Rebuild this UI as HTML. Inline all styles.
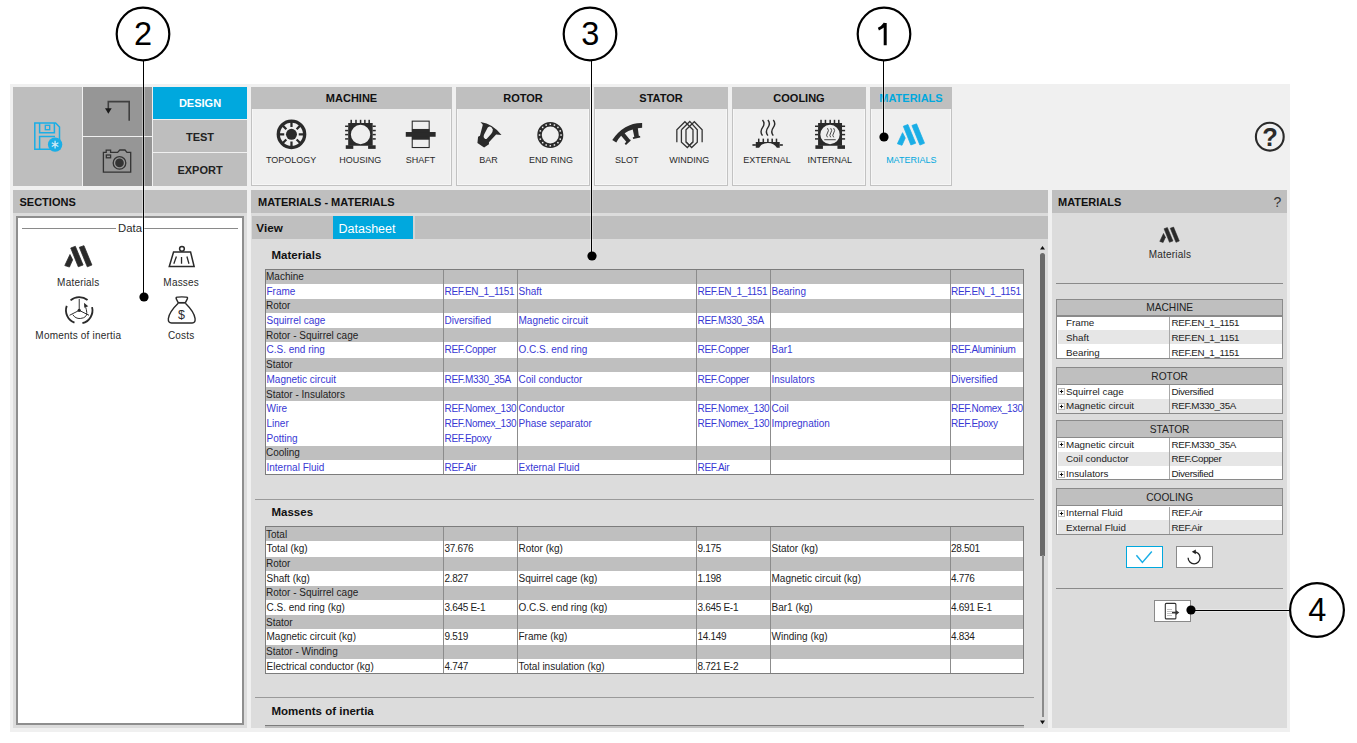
<!DOCTYPE html><html><head><meta charset="utf-8"><style>
html,body{margin:0;padding:0;background:#fff;width:1357px;height:743px;overflow:hidden;}
body{position:relative;font-family:"Liberation Sans",sans-serif;}
div,svg{position:absolute;}
</style></head><body>
<div style="left:10px;top:84px;width:1280px;height:648px;background:#f0f0f0;"></div>
<div style="left:13px;top:87px;width:69px;height:98.6px;background:#bebebe;"></div>
<div style="left:83px;top:87px;width:69px;height:49px;background:#969696;"></div>
<div style="left:83px;top:137px;width:69px;height:48.6px;background:#969696;"></div>
<div style="left:153px;top:87px;width:94px;height:32px;background:#00a8de;"></div>
<div style="left:153px;top:120px;width:94px;height:32px;background:#bebebe;"></div>
<div style="left:153px;top:153px;width:94px;height:32.6px;background:#bebebe;"></div>
<div style="left:153px;top:87px;width:94px;height:32px;line-height:32px;font-size:11px;font-weight:bold;color:#fff;text-align:center;white-space:nowrap;">DESIGN</div>
<div style="left:153px;top:120.5px;width:94px;height:32px;line-height:32px;font-size:11px;font-weight:bold;color:#222;text-align:center;white-space:nowrap;">TEST</div>
<div style="left:153px;top:154px;width:94px;height:32px;line-height:32px;font-size:11px;font-weight:bold;color:#222;text-align:center;white-space:nowrap;">EXPORT</div>
<div style="left:251px;top:87px;width:201px;height:22px;background:#bfbfbf;"></div>
<div style="left:251px;top:109px;width:201px;height:77px;background:#efefef;box-sizing:border-box;border:1px solid #c2c2c2;border-top:none;box-shadow:inset -1px -1px 0 #f6f6f6, inset 1px 0 0 #f6f6f6;"></div>
<div style="left:251px;top:87px;width:201px;height:22px;line-height:22px;font-size:11px;font-weight:bold;color:#111;text-align:center;white-space:nowrap;">MACHINE</div>
<div style="left:456px;top:87px;width:134px;height:22px;background:#bfbfbf;"></div>
<div style="left:456px;top:109px;width:134px;height:77px;background:#efefef;box-sizing:border-box;border:1px solid #c2c2c2;border-top:none;box-shadow:inset -1px -1px 0 #f6f6f6, inset 1px 0 0 #f6f6f6;"></div>
<div style="left:456px;top:87px;width:134px;height:22px;line-height:22px;font-size:11px;font-weight:bold;color:#111;text-align:center;white-space:nowrap;">ROTOR</div>
<div style="left:594px;top:87px;width:134px;height:22px;background:#bfbfbf;"></div>
<div style="left:594px;top:109px;width:134px;height:77px;background:#efefef;box-sizing:border-box;border:1px solid #c2c2c2;border-top:none;box-shadow:inset -1px -1px 0 #f6f6f6, inset 1px 0 0 #f6f6f6;"></div>
<div style="left:594px;top:87px;width:134px;height:22px;line-height:22px;font-size:11px;font-weight:bold;color:#111;text-align:center;white-space:nowrap;">STATOR</div>
<div style="left:732px;top:87px;width:134px;height:22px;background:#bfbfbf;"></div>
<div style="left:732px;top:109px;width:134px;height:77px;background:#efefef;box-sizing:border-box;border:1px solid #c2c2c2;border-top:none;box-shadow:inset -1px -1px 0 #f6f6f6, inset 1px 0 0 #f6f6f6;"></div>
<div style="left:732px;top:87px;width:134px;height:22px;line-height:22px;font-size:11px;font-weight:bold;color:#111;text-align:center;white-space:nowrap;">COOLING</div>
<div style="left:870px;top:87px;width:82px;height:22px;background:#bfbfbf;"></div>
<div style="left:870px;top:109px;width:82px;height:77px;background:#efefef;box-sizing:border-box;border:1px solid #c2c2c2;border-top:none;box-shadow:inset -1px -1px 0 #f6f6f6, inset 1px 0 0 #f6f6f6;"></div>
<div style="left:870px;top:87px;width:82px;height:22px;line-height:22px;font-size:11px;font-weight:bold;color:#00a8de;text-align:center;white-space:nowrap;">MATERIALS</div>
<div style="left:251.2px;top:152px;width:80px;height:16px;line-height:16px;font-size:9px;font-weight:normal;color:#2a2a2a;text-align:center;white-space:nowrap;">TOPOLOGY</div>
<div style="left:320.2px;top:152px;width:80px;height:16px;line-height:16px;font-size:9px;font-weight:normal;color:#2a2a2a;text-align:center;white-space:nowrap;">HOUSING</div>
<div style="left:380.4px;top:152px;width:80px;height:16px;line-height:16px;font-size:9px;font-weight:normal;color:#2a2a2a;text-align:center;white-space:nowrap;">SHAFT</div>
<div style="left:448.5px;top:152px;width:80px;height:16px;line-height:16px;font-size:9px;font-weight:normal;color:#2a2a2a;text-align:center;white-space:nowrap;">BAR</div>
<div style="left:510.9px;top:152px;width:80px;height:16px;line-height:16px;font-size:9px;font-weight:normal;color:#2a2a2a;text-align:center;white-space:nowrap;">END RING</div>
<div style="left:586.8px;top:152px;width:80px;height:16px;line-height:16px;font-size:9px;font-weight:normal;color:#2a2a2a;text-align:center;white-space:nowrap;">SLOT</div>
<div style="left:649.2px;top:152px;width:80px;height:16px;line-height:16px;font-size:9px;font-weight:normal;color:#2a2a2a;text-align:center;white-space:nowrap;">WINDING</div>
<div style="left:727px;top:152px;width:80px;height:16px;line-height:16px;font-size:9px;font-weight:normal;color:#2a2a2a;text-align:center;white-space:nowrap;">EXTERNAL</div>
<div style="left:789.8px;top:152px;width:80px;height:16px;line-height:16px;font-size:9px;font-weight:normal;color:#2a2a2a;text-align:center;white-space:nowrap;">INTERNAL</div>
<div style="left:871.3px;top:152px;width:80px;height:16px;line-height:16px;font-size:9px;font-weight:normal;color:#00a8de;text-align:center;white-space:nowrap;">MATERIALS</div>
<div style="left:13px;top:190px;width:234px;height:22.5px;background:#bfbfbf;"></div>
<div style="left:19.5px;top:190.8px;width:120px;height:22.5px;line-height:22.5px;font-size:11px;font-weight:bold;color:#111;text-align:left;white-space:nowrap;">SECTIONS</div>
<div style="left:13px;top:212.5px;width:234px;height:515px;background:#dcdcdc;"></div>
<div style="left:16px;top:216px;width:228px;height:509px;background:#fff;box-sizing:border-box;border:2px solid #8e8e8e;"></div>
<div style="left:22px;top:228px;width:216px;height:1px;background:#8a8a8a;"></div>
<div style="left:116px;top:220px;width:28px;height:17px;line-height:17px;font-size:11.3px;font-weight:normal;color:#2a2a2a;text-align:center;white-space:nowrap;background:#fff;">Data</div>
<div style="left:18.299999999999997px;top:274.5px;width:120px;height:16px;line-height:16px;font-size:10px;font-weight:normal;color:#2a2a2a;text-align:center;white-space:nowrap;letter-spacing:0.2px;">Materials</div>
<div style="left:121.19999999999999px;top:274.5px;width:120px;height:16px;line-height:16px;font-size:10px;font-weight:normal;color:#2a2a2a;text-align:center;white-space:nowrap;letter-spacing:0.2px;">Masses</div>
<div style="left:18.299999999999997px;top:327.7px;width:120px;height:16px;line-height:16px;font-size:10px;font-weight:normal;color:#2a2a2a;text-align:center;white-space:nowrap;letter-spacing:0.2px;">Moments of inertia</div>
<div style="left:121.19999999999999px;top:327.7px;width:120px;height:16px;line-height:16px;font-size:10px;font-weight:normal;color:#2a2a2a;text-align:center;white-space:nowrap;letter-spacing:0.2px;">Costs</div>
<div style="left:251px;top:190px;width:797px;height:22.5px;background:#bfbfbf;"></div>
<div style="left:258px;top:190.8px;width:300px;height:22.5px;line-height:22.5px;font-size:11px;font-weight:bold;color:#111;text-align:left;white-space:nowrap;">MATERIALS - MATERIALS</div>
<div style="left:251px;top:212.5px;width:797px;height:515px;background:#dcdcdc;"></div>
<div style="left:251.5px;top:216px;width:796.5px;height:23px;background:#bfbfbf;"></div>
<div style="left:256.3px;top:215.9px;width:70px;height:23px;line-height:23px;font-size:11.7px;font-weight:bold;color:#111;text-align:left;white-space:nowrap;">View</div>
<div style="left:333px;top:216px;width:80px;height:23px;background:#00a8de;"></div>
<div style="left:413px;top:216px;width:1.8px;height:23px;background:#d4d4d4;"></div>
<div style="left:338.5px;top:217.5px;width:75px;height:23px;line-height:23px;font-size:12.5px;font-weight:normal;color:#fff;text-align:left;white-space:nowrap;">Datasheet</div>
<div style="left:1052px;top:190px;width:235px;height:22.5px;background:#bfbfbf;"></div>
<div style="left:1058px;top:190.8px;width:120px;height:22.5px;line-height:22.5px;font-size:11px;font-weight:bold;color:#111;text-align:left;white-space:nowrap;">MATERIALS</div>
<div style="left:1268.5px;top:190.5px;width:18px;height:22.5px;line-height:22.5px;font-size:14px;font-weight:normal;color:#333;text-align:center;white-space:nowrap;">?</div>
<div style="left:1052px;top:212.5px;width:235px;height:515px;background:#dcdcdc;"></div>
<div style="left:1055.5px;top:283px;width:227.5px;height:1px;background:#8a8a8a;"></div>
<div style="left:1110px;top:247.3px;width:120px;height:16px;line-height:16px;font-size:10px;font-weight:normal;color:#2a2a2a;text-align:center;white-space:nowrap;letter-spacing:0.2px;">Materials</div>
<div style="left:1055.5px;top:588px;width:227.5px;height:1px;background:#8a8a8a;"></div>
<div style="left:271.5px;top:245px;width:200px;height:21px;line-height:21px;font-size:11.5px;font-weight:bold;color:#111;text-align:left;white-space:nowrap;">Materials</div>
<div style="left:265px;top:269.6px;width:759px;height:204px;background:#fff;"></div>
<div style="left:265px;top:269.6px;width:759px;height:13.91px;background:#bfbfbf;"></div>
<div style="left:266px;top:269.90000000000003px;width:170px;height:14.65px;line-height:14.65px;font-size:10px;font-weight:normal;color:#222;text-align:left;white-space:nowrap;">Machine</div>
<div style="left:266.5px;top:284.61px;width:200px;height:14.65px;line-height:14.65px;font-size:10px;font-weight:normal;color:#3838d4;text-align:left;white-space:nowrap;">Frame</div>
<div style="left:444.5px;top:284.61px;width:200px;height:14.65px;line-height:14.65px;font-size:10px;font-weight:normal;color:#3838d4;text-align:left;white-space:nowrap;letter-spacing:-0.3px;">REF.EN_1_1151</div>
<div style="left:518.5px;top:284.61px;width:200px;height:14.65px;line-height:14.65px;font-size:10px;font-weight:normal;color:#3838d4;text-align:left;white-space:nowrap;">Shaft</div>
<div style="left:697.5px;top:284.61px;width:200px;height:14.65px;line-height:14.65px;font-size:10px;font-weight:normal;color:#3838d4;text-align:left;white-space:nowrap;letter-spacing:-0.3px;">REF.EN_1_1151</div>
<div style="left:771.5px;top:284.61px;width:200px;height:14.65px;line-height:14.65px;font-size:10px;font-weight:normal;color:#3838d4;text-align:left;white-space:nowrap;">Bearing</div>
<div style="left:951.0px;top:284.61px;width:200px;height:14.65px;line-height:14.65px;font-size:10px;font-weight:normal;color:#3838d4;text-align:left;white-space:nowrap;letter-spacing:-0.3px;">REF.EN_1_1151</div>
<div style="left:265px;top:299.02000000000004px;width:759px;height:13.91px;background:#bfbfbf;"></div>
<div style="left:266px;top:299.32000000000005px;width:170px;height:14.65px;line-height:14.65px;font-size:10px;font-weight:normal;color:#222;text-align:left;white-space:nowrap;">Rotor</div>
<div style="left:266.5px;top:314.03000000000003px;width:200px;height:14.65px;line-height:14.65px;font-size:10px;font-weight:normal;color:#3838d4;text-align:left;white-space:nowrap;">Squirrel cage</div>
<div style="left:444.5px;top:314.03000000000003px;width:200px;height:14.65px;line-height:14.65px;font-size:10px;font-weight:normal;color:#3838d4;text-align:left;white-space:nowrap;">Diversified</div>
<div style="left:518.5px;top:314.03000000000003px;width:200px;height:14.65px;line-height:14.65px;font-size:10px;font-weight:normal;color:#3838d4;text-align:left;white-space:nowrap;">Magnetic circuit</div>
<div style="left:697.5px;top:314.03000000000003px;width:200px;height:14.65px;line-height:14.65px;font-size:10px;font-weight:normal;color:#3838d4;text-align:left;white-space:nowrap;letter-spacing:-0.3px;">REF.M330_35A</div>
<div style="left:265px;top:328.44000000000005px;width:759px;height:13.91px;background:#bfbfbf;"></div>
<div style="left:266px;top:328.74000000000007px;width:170px;height:14.65px;line-height:14.65px;font-size:10px;font-weight:normal;color:#222;text-align:left;white-space:nowrap;">Rotor - Squirrel cage</div>
<div style="left:266.5px;top:343.45000000000005px;width:200px;height:14.65px;line-height:14.65px;font-size:10px;font-weight:normal;color:#3838d4;text-align:left;white-space:nowrap;">C.S. end ring</div>
<div style="left:444.5px;top:343.45000000000005px;width:200px;height:14.65px;line-height:14.65px;font-size:10px;font-weight:normal;color:#3838d4;text-align:left;white-space:nowrap;letter-spacing:-0.3px;">REF.Copper</div>
<div style="left:518.5px;top:343.45000000000005px;width:200px;height:14.65px;line-height:14.65px;font-size:10px;font-weight:normal;color:#3838d4;text-align:left;white-space:nowrap;">O.C.S. end ring</div>
<div style="left:697.5px;top:343.45000000000005px;width:200px;height:14.65px;line-height:14.65px;font-size:10px;font-weight:normal;color:#3838d4;text-align:left;white-space:nowrap;letter-spacing:-0.3px;">REF.Copper</div>
<div style="left:771.5px;top:343.45000000000005px;width:200px;height:14.65px;line-height:14.65px;font-size:10px;font-weight:normal;color:#3838d4;text-align:left;white-space:nowrap;">Bar1</div>
<div style="left:951.0px;top:343.45000000000005px;width:200px;height:14.65px;line-height:14.65px;font-size:10px;font-weight:normal;color:#3838d4;text-align:left;white-space:nowrap;letter-spacing:-0.3px;">REF.Aluminium</div>
<div style="left:265px;top:357.86px;width:759px;height:13.91px;background:#bfbfbf;"></div>
<div style="left:266px;top:358.16px;width:170px;height:14.65px;line-height:14.65px;font-size:10px;font-weight:normal;color:#222;text-align:left;white-space:nowrap;">Stator</div>
<div style="left:266.5px;top:372.87000000000006px;width:200px;height:14.65px;line-height:14.65px;font-size:10px;font-weight:normal;color:#3838d4;text-align:left;white-space:nowrap;">Magnetic circuit</div>
<div style="left:444.5px;top:372.87000000000006px;width:200px;height:14.65px;line-height:14.65px;font-size:10px;font-weight:normal;color:#3838d4;text-align:left;white-space:nowrap;letter-spacing:-0.3px;">REF.M330_35A</div>
<div style="left:518.5px;top:372.87000000000006px;width:200px;height:14.65px;line-height:14.65px;font-size:10px;font-weight:normal;color:#3838d4;text-align:left;white-space:nowrap;">Coil conductor</div>
<div style="left:697.5px;top:372.87000000000006px;width:200px;height:14.65px;line-height:14.65px;font-size:10px;font-weight:normal;color:#3838d4;text-align:left;white-space:nowrap;letter-spacing:-0.3px;">REF.Copper</div>
<div style="left:771.5px;top:372.87000000000006px;width:200px;height:14.65px;line-height:14.65px;font-size:10px;font-weight:normal;color:#3838d4;text-align:left;white-space:nowrap;">Insulators</div>
<div style="left:951.0px;top:372.87000000000006px;width:200px;height:14.65px;line-height:14.65px;font-size:10px;font-weight:normal;color:#3838d4;text-align:left;white-space:nowrap;">Diversified</div>
<div style="left:265px;top:387.28000000000003px;width:759px;height:13.91px;background:#bfbfbf;"></div>
<div style="left:266px;top:387.58000000000004px;width:170px;height:14.65px;line-height:14.65px;font-size:10px;font-weight:normal;color:#222;text-align:left;white-space:nowrap;">Stator - Insulators</div>
<div style="left:266.5px;top:402.29px;width:200px;height:14.65px;line-height:14.65px;font-size:10px;font-weight:normal;color:#3838d4;text-align:left;white-space:nowrap;">Wire</div>
<div style="left:444.5px;top:402.29px;width:200px;height:14.65px;line-height:14.65px;font-size:10px;font-weight:normal;color:#3838d4;text-align:left;white-space:nowrap;letter-spacing:-0.3px;">REF.Nomex_130</div>
<div style="left:518.5px;top:402.29px;width:200px;height:14.65px;line-height:14.65px;font-size:10px;font-weight:normal;color:#3838d4;text-align:left;white-space:nowrap;">Conductor</div>
<div style="left:697.5px;top:402.29px;width:200px;height:14.65px;line-height:14.65px;font-size:10px;font-weight:normal;color:#3838d4;text-align:left;white-space:nowrap;letter-spacing:-0.3px;">REF.Nomex_130</div>
<div style="left:771.5px;top:402.29px;width:200px;height:14.65px;line-height:14.65px;font-size:10px;font-weight:normal;color:#3838d4;text-align:left;white-space:nowrap;">Coil</div>
<div style="left:951.0px;top:402.29px;width:200px;height:14.65px;line-height:14.65px;font-size:10px;font-weight:normal;color:#3838d4;text-align:left;white-space:nowrap;letter-spacing:-0.3px;">REF.Nomex_130</div>
<div style="left:266.5px;top:417.00000000000006px;width:200px;height:14.65px;line-height:14.65px;font-size:10px;font-weight:normal;color:#3838d4;text-align:left;white-space:nowrap;">Liner</div>
<div style="left:444.5px;top:417.00000000000006px;width:200px;height:14.65px;line-height:14.65px;font-size:10px;font-weight:normal;color:#3838d4;text-align:left;white-space:nowrap;letter-spacing:-0.3px;">REF.Nomex_130</div>
<div style="left:518.5px;top:417.00000000000006px;width:200px;height:14.65px;line-height:14.65px;font-size:10px;font-weight:normal;color:#3838d4;text-align:left;white-space:nowrap;">Phase separator</div>
<div style="left:697.5px;top:417.00000000000006px;width:200px;height:14.65px;line-height:14.65px;font-size:10px;font-weight:normal;color:#3838d4;text-align:left;white-space:nowrap;letter-spacing:-0.3px;">REF.Nomex_130</div>
<div style="left:771.5px;top:417.00000000000006px;width:200px;height:14.65px;line-height:14.65px;font-size:10px;font-weight:normal;color:#3838d4;text-align:left;white-space:nowrap;">Impregnation</div>
<div style="left:951.0px;top:417.00000000000006px;width:200px;height:14.65px;line-height:14.65px;font-size:10px;font-weight:normal;color:#3838d4;text-align:left;white-space:nowrap;letter-spacing:-0.3px;">REF.Epoxy</div>
<div style="left:266.5px;top:431.71000000000004px;width:200px;height:14.65px;line-height:14.65px;font-size:10px;font-weight:normal;color:#3838d4;text-align:left;white-space:nowrap;">Potting</div>
<div style="left:444.5px;top:431.71000000000004px;width:200px;height:14.65px;line-height:14.65px;font-size:10px;font-weight:normal;color:#3838d4;text-align:left;white-space:nowrap;letter-spacing:-0.3px;">REF.Epoxy</div>
<div style="left:265px;top:446.12px;width:759px;height:13.91px;background:#bfbfbf;"></div>
<div style="left:266px;top:446.42px;width:170px;height:14.65px;line-height:14.65px;font-size:10px;font-weight:normal;color:#222;text-align:left;white-space:nowrap;">Cooling</div>
<div style="left:266.5px;top:461.13000000000005px;width:200px;height:14.65px;line-height:14.65px;font-size:10px;font-weight:normal;color:#3838d4;text-align:left;white-space:nowrap;">Internal Fluid</div>
<div style="left:444.5px;top:461.13000000000005px;width:200px;height:14.65px;line-height:14.65px;font-size:10px;font-weight:normal;color:#3838d4;text-align:left;white-space:nowrap;letter-spacing:-0.3px;">REF.Air</div>
<div style="left:518.5px;top:461.13000000000005px;width:200px;height:14.65px;line-height:14.65px;font-size:10px;font-weight:normal;color:#3838d4;text-align:left;white-space:nowrap;">External Fluid</div>
<div style="left:697.5px;top:461.13000000000005px;width:200px;height:14.65px;line-height:14.65px;font-size:10px;font-weight:normal;color:#3838d4;text-align:left;white-space:nowrap;letter-spacing:-0.3px;">REF.Air</div>
<div style="left:443px;top:269.6px;width:1px;height:204px;background:#8c8c8c;"></div>
<div style="left:517px;top:269.6px;width:1px;height:204px;background:#8c8c8c;"></div>
<div style="left:696px;top:269.6px;width:1px;height:204px;background:#8c8c8c;"></div>
<div style="left:770px;top:269.6px;width:1px;height:204px;background:#8c8c8c;"></div>
<div style="left:949.5px;top:269.6px;width:1px;height:204px;background:#8c8c8c;"></div>
<div style="left:264.5px;top:268.6px;width:759.5px;height:206px;box-sizing:border-box;border:1.2px solid #7c7c7c;"></div>
<div style="left:254.5px;top:498.5px;width:779.5px;height:1px;background:#9a9a9a;"></div>
<div style="left:271.5px;top:502.2px;width:200px;height:21px;line-height:21px;font-size:11.5px;font-weight:bold;color:#111;text-align:left;white-space:nowrap;">Masses</div>
<div style="left:265px;top:527.3px;width:759px;height:146px;background:#fff;"></div>
<div style="left:265px;top:527.3px;width:759px;height:13.879999999999999px;background:#bfbfbf;"></div>
<div style="left:266px;top:527.5999999999999px;width:170px;height:14.65px;line-height:14.65px;font-size:10px;font-weight:normal;color:#222;text-align:left;white-space:nowrap;">Total</div>
<div style="left:266.5px;top:542.2799999999999px;width:200px;height:14.65px;line-height:14.65px;font-size:10px;font-weight:normal;color:#222;text-align:left;white-space:nowrap;">Total (kg)</div>
<div style="left:444.5px;top:542.2799999999999px;width:200px;height:14.65px;line-height:14.65px;font-size:10px;font-weight:normal;color:#222;text-align:left;white-space:nowrap;letter-spacing:-0.3px;">37.676</div>
<div style="left:518.5px;top:542.2799999999999px;width:200px;height:14.65px;line-height:14.65px;font-size:10px;font-weight:normal;color:#222;text-align:left;white-space:nowrap;">Rotor (kg)</div>
<div style="left:697.5px;top:542.2799999999999px;width:200px;height:14.65px;line-height:14.65px;font-size:10px;font-weight:normal;color:#222;text-align:left;white-space:nowrap;letter-spacing:-0.3px;">9.175</div>
<div style="left:771.5px;top:542.2799999999999px;width:200px;height:14.65px;line-height:14.65px;font-size:10px;font-weight:normal;color:#222;text-align:left;white-space:nowrap;">Stator (kg)</div>
<div style="left:951.0px;top:542.2799999999999px;width:200px;height:14.65px;line-height:14.65px;font-size:10px;font-weight:normal;color:#222;text-align:left;white-space:nowrap;letter-spacing:-0.3px;">28.501</div>
<div style="left:265px;top:556.66px;width:759px;height:13.879999999999999px;background:#bfbfbf;"></div>
<div style="left:266px;top:556.9599999999999px;width:170px;height:14.65px;line-height:14.65px;font-size:10px;font-weight:normal;color:#222;text-align:left;white-space:nowrap;">Rotor</div>
<div style="left:266.5px;top:571.6399999999999px;width:200px;height:14.65px;line-height:14.65px;font-size:10px;font-weight:normal;color:#222;text-align:left;white-space:nowrap;">Shaft (kg)</div>
<div style="left:444.5px;top:571.6399999999999px;width:200px;height:14.65px;line-height:14.65px;font-size:10px;font-weight:normal;color:#222;text-align:left;white-space:nowrap;letter-spacing:-0.3px;">2.827</div>
<div style="left:518.5px;top:571.6399999999999px;width:200px;height:14.65px;line-height:14.65px;font-size:10px;font-weight:normal;color:#222;text-align:left;white-space:nowrap;">Squirrel cage (kg)</div>
<div style="left:697.5px;top:571.6399999999999px;width:200px;height:14.65px;line-height:14.65px;font-size:10px;font-weight:normal;color:#222;text-align:left;white-space:nowrap;letter-spacing:-0.3px;">1.198</div>
<div style="left:771.5px;top:571.6399999999999px;width:200px;height:14.65px;line-height:14.65px;font-size:10px;font-weight:normal;color:#222;text-align:left;white-space:nowrap;">Magnetic circuit (kg)</div>
<div style="left:951.0px;top:571.6399999999999px;width:200px;height:14.65px;line-height:14.65px;font-size:10px;font-weight:normal;color:#222;text-align:left;white-space:nowrap;letter-spacing:-0.3px;">4.776</div>
<div style="left:265px;top:586.02px;width:759px;height:13.879999999999999px;background:#bfbfbf;"></div>
<div style="left:266px;top:586.3199999999999px;width:170px;height:14.65px;line-height:14.65px;font-size:10px;font-weight:normal;color:#222;text-align:left;white-space:nowrap;">Rotor - Squirrel cage</div>
<div style="left:266.5px;top:600.9999999999999px;width:200px;height:14.65px;line-height:14.65px;font-size:10px;font-weight:normal;color:#222;text-align:left;white-space:nowrap;">C.S. end ring (kg)</div>
<div style="left:444.5px;top:600.9999999999999px;width:200px;height:14.65px;line-height:14.65px;font-size:10px;font-weight:normal;color:#222;text-align:left;white-space:nowrap;letter-spacing:-0.3px;">3.645 E-1</div>
<div style="left:518.5px;top:600.9999999999999px;width:200px;height:14.65px;line-height:14.65px;font-size:10px;font-weight:normal;color:#222;text-align:left;white-space:nowrap;">O.C.S. end ring (kg)</div>
<div style="left:697.5px;top:600.9999999999999px;width:200px;height:14.65px;line-height:14.65px;font-size:10px;font-weight:normal;color:#222;text-align:left;white-space:nowrap;letter-spacing:-0.3px;">3.645 E-1</div>
<div style="left:771.5px;top:600.9999999999999px;width:200px;height:14.65px;line-height:14.65px;font-size:10px;font-weight:normal;color:#222;text-align:left;white-space:nowrap;">Bar1 (kg)</div>
<div style="left:951.0px;top:600.9999999999999px;width:200px;height:14.65px;line-height:14.65px;font-size:10px;font-weight:normal;color:#222;text-align:left;white-space:nowrap;letter-spacing:-0.3px;">4.691 E-1</div>
<div style="left:265px;top:615.38px;width:759px;height:13.879999999999999px;background:#bfbfbf;"></div>
<div style="left:266px;top:615.68px;width:170px;height:14.65px;line-height:14.65px;font-size:10px;font-weight:normal;color:#222;text-align:left;white-space:nowrap;">Stator</div>
<div style="left:266.5px;top:630.3599999999999px;width:200px;height:14.65px;line-height:14.65px;font-size:10px;font-weight:normal;color:#222;text-align:left;white-space:nowrap;">Magnetic circuit (kg)</div>
<div style="left:444.5px;top:630.3599999999999px;width:200px;height:14.65px;line-height:14.65px;font-size:10px;font-weight:normal;color:#222;text-align:left;white-space:nowrap;letter-spacing:-0.3px;">9.519</div>
<div style="left:518.5px;top:630.3599999999999px;width:200px;height:14.65px;line-height:14.65px;font-size:10px;font-weight:normal;color:#222;text-align:left;white-space:nowrap;">Frame (kg)</div>
<div style="left:697.5px;top:630.3599999999999px;width:200px;height:14.65px;line-height:14.65px;font-size:10px;font-weight:normal;color:#222;text-align:left;white-space:nowrap;letter-spacing:-0.3px;">14.149</div>
<div style="left:771.5px;top:630.3599999999999px;width:200px;height:14.65px;line-height:14.65px;font-size:10px;font-weight:normal;color:#222;text-align:left;white-space:nowrap;">Winding (kg)</div>
<div style="left:951.0px;top:630.3599999999999px;width:200px;height:14.65px;line-height:14.65px;font-size:10px;font-weight:normal;color:#222;text-align:left;white-space:nowrap;letter-spacing:-0.3px;">4.834</div>
<div style="left:265px;top:644.74px;width:759px;height:13.879999999999999px;background:#bfbfbf;"></div>
<div style="left:266px;top:645.04px;width:170px;height:14.65px;line-height:14.65px;font-size:10px;font-weight:normal;color:#222;text-align:left;white-space:nowrap;">Stator - Winding</div>
<div style="left:266.5px;top:659.7199999999999px;width:200px;height:14.65px;line-height:14.65px;font-size:10px;font-weight:normal;color:#222;text-align:left;white-space:nowrap;">Electrical conductor (kg)</div>
<div style="left:444.5px;top:659.7199999999999px;width:200px;height:14.65px;line-height:14.65px;font-size:10px;font-weight:normal;color:#222;text-align:left;white-space:nowrap;letter-spacing:-0.3px;">4.747</div>
<div style="left:518.5px;top:659.7199999999999px;width:200px;height:14.65px;line-height:14.65px;font-size:10px;font-weight:normal;color:#222;text-align:left;white-space:nowrap;">Total insulation (kg)</div>
<div style="left:697.5px;top:659.7199999999999px;width:200px;height:14.65px;line-height:14.65px;font-size:10px;font-weight:normal;color:#222;text-align:left;white-space:nowrap;letter-spacing:-0.3px;">8.721 E-2</div>
<div style="left:443px;top:527.3px;width:1px;height:146px;background:#8c8c8c;"></div>
<div style="left:517px;top:527.3px;width:1px;height:146px;background:#8c8c8c;"></div>
<div style="left:696px;top:527.3px;width:1px;height:146px;background:#8c8c8c;"></div>
<div style="left:770px;top:527.3px;width:1px;height:146px;background:#8c8c8c;"></div>
<div style="left:949.5px;top:527.3px;width:1px;height:146px;background:#8c8c8c;"></div>
<div style="left:264.5px;top:526.3px;width:759.5px;height:148px;box-sizing:border-box;border:1.2px solid #7c7c7c;"></div>
<div style="left:254.5px;top:697px;width:779.5px;height:1px;background:#9a9a9a;"></div>
<div style="left:271.5px;top:701.2px;width:200px;height:21px;line-height:21px;font-size:11.5px;font-weight:bold;color:#111;text-align:left;white-space:nowrap;">Moments of inertia</div>
<div style="left:264.5px;top:725.5px;width:759px;height:2px;background:#bfbfbf;"></div>
<div style="left:264.5px;top:724.8px;width:759px;height:1.2px;background:#7c7c7c;"></div>
<svg style="left:1038px;top:244px;" width="9" height="7" viewBox="0 0 9 7"><path d="M2 5.6 L4.5 2 L7 5.6 Z" fill="#111"/></svg>
<div style="left:1040.2px;top:253.2px;width:5.2px;height:303px;background:#6a6a6a;border-radius:2.5px 2.5px 0 0;"></div>
<div style="left:1041.5px;top:555px;width:2.6px;height:161.5px;background:#8a8a8a;"></div>
<svg style="left:1038px;top:718px;" width="9" height="7" viewBox="0 0 9 7"><path d="M2 2.6 L7 2.6 L4.5 6.2 Z" fill="#111"/></svg>
<div style="left:1056.3px;top:298.5px;width:226.7px;height:60.3px;background:#fff;"></div>
<div style="left:1056.3px;top:298.5px;width:226.7px;height:17.6px;background:#bfbfbf;"></div>
<div style="left:1056.3px;top:315.3px;width:226.7px;height:1.4px;background:#8a8a8a;"></div>
<div style="left:1056.3px;top:299.1px;width:226.7px;height:17px;line-height:17px;font-size:10.2px;font-weight:normal;color:#222;text-align:center;white-space:nowrap;">MACHINE</div>
<div style="left:1066px;top:316.4px;width:100px;height:13.7px;line-height:13.7px;font-size:9.8px;font-weight:normal;color:#222;text-align:left;white-space:nowrap;">Frame</div>
<div style="left:1171.5px;top:316.4px;width:110px;height:13.7px;line-height:13.7px;font-size:9.8px;font-weight:normal;color:#222;text-align:left;white-space:nowrap;letter-spacing:-0.35px;">REF.EN_1_1151</div>
<div style="left:1057.5px;top:330.4px;width:224.5px;height:13.7px;background:#e6e6e6;"></div>
<div style="left:1066px;top:330.95px;width:100px;height:13.7px;line-height:13.7px;font-size:9.8px;font-weight:normal;color:#222;text-align:left;white-space:nowrap;">Shaft</div>
<div style="left:1171.5px;top:330.95px;width:110px;height:13.7px;line-height:13.7px;font-size:9.8px;font-weight:normal;color:#222;text-align:left;white-space:nowrap;letter-spacing:-0.35px;">REF.EN_1_1151</div>
<div style="left:1066px;top:345.5px;width:100px;height:13.7px;line-height:13.7px;font-size:9.8px;font-weight:normal;color:#222;text-align:left;white-space:nowrap;">Bearing</div>
<div style="left:1171.5px;top:345.5px;width:110px;height:13.7px;line-height:13.7px;font-size:9.8px;font-weight:normal;color:#222;text-align:left;white-space:nowrap;letter-spacing:-0.35px;">REF.EN_1_1151</div>
<div style="left:1168.8px;top:316.7px;width:1.2px;height:41.099999999999994px;background:#a8a8a8;"></div>
<div style="left:1056.3px;top:298.5px;width:226.7px;height:60.3px;box-sizing:border-box;border:1.3px solid #8a8a8a;"></div>
<div style="left:1056.3px;top:367px;width:226.7px;height:46.599999999999994px;background:#fff;"></div>
<div style="left:1056.3px;top:367px;width:226.7px;height:17.6px;background:#bfbfbf;"></div>
<div style="left:1056.3px;top:383.8px;width:226.7px;height:1.4px;background:#8a8a8a;"></div>
<div style="left:1056.3px;top:367.6px;width:226.7px;height:17px;line-height:17px;font-size:10.2px;font-weight:normal;color:#222;text-align:center;white-space:nowrap;">ROTOR</div>
<div style="left:1066px;top:384.9px;width:100px;height:13.7px;line-height:13.7px;font-size:9.8px;font-weight:normal;color:#222;text-align:left;white-space:nowrap;">Squirrel cage</div>
<div style="left:1171.5px;top:384.9px;width:110px;height:13.7px;line-height:13.7px;font-size:9.8px;font-weight:normal;color:#222;text-align:left;white-space:nowrap;letter-spacing:-0.35px;">Diversified</div>
<svg style="left:1058px;top:388.4px;" width="7" height="7" viewBox="0 0 7 7"><rect x="0.5" y="0.5" width="6" height="6" fill="#fff" stroke="#bbb" stroke-width="1"/><path d="M1.8 3.5 H5.2 M3.5 1.8 V5.2" stroke="#111" stroke-width="1"/></svg>
<div style="left:1057.5px;top:398.9px;width:224.5px;height:13.7px;background:#e6e6e6;"></div>
<div style="left:1066px;top:399.45px;width:100px;height:13.7px;line-height:13.7px;font-size:9.8px;font-weight:normal;color:#222;text-align:left;white-space:nowrap;">Magnetic circuit</div>
<div style="left:1171.5px;top:399.45px;width:110px;height:13.7px;line-height:13.7px;font-size:9.8px;font-weight:normal;color:#222;text-align:left;white-space:nowrap;letter-spacing:-0.35px;">REF.M330_35A</div>
<svg style="left:1058px;top:402.95px;" width="7" height="7" viewBox="0 0 7 7"><rect x="0.5" y="0.5" width="6" height="6" fill="#fff" stroke="#bbb" stroke-width="1"/><path d="M1.8 3.5 H5.2 M3.5 1.8 V5.2" stroke="#111" stroke-width="1"/></svg>
<div style="left:1168.8px;top:385.2px;width:1.2px;height:27.4px;background:#a8a8a8;"></div>
<div style="left:1056.3px;top:367px;width:226.7px;height:46.599999999999994px;box-sizing:border-box;border:1.3px solid #8a8a8a;"></div>
<div style="left:1056.3px;top:420px;width:226.7px;height:60.3px;background:#fff;"></div>
<div style="left:1056.3px;top:420px;width:226.7px;height:17.6px;background:#bfbfbf;"></div>
<div style="left:1056.3px;top:436.8px;width:226.7px;height:1.4px;background:#8a8a8a;"></div>
<div style="left:1056.3px;top:420.6px;width:226.7px;height:17px;line-height:17px;font-size:10.2px;font-weight:normal;color:#222;text-align:center;white-space:nowrap;">STATOR</div>
<div style="left:1066px;top:437.9px;width:100px;height:13.7px;line-height:13.7px;font-size:9.8px;font-weight:normal;color:#222;text-align:left;white-space:nowrap;">Magnetic circuit</div>
<div style="left:1171.5px;top:437.9px;width:110px;height:13.7px;line-height:13.7px;font-size:9.8px;font-weight:normal;color:#222;text-align:left;white-space:nowrap;letter-spacing:-0.35px;">REF.M330_35A</div>
<svg style="left:1058px;top:441.4px;" width="7" height="7" viewBox="0 0 7 7"><rect x="0.5" y="0.5" width="6" height="6" fill="#fff" stroke="#bbb" stroke-width="1"/><path d="M1.8 3.5 H5.2 M3.5 1.8 V5.2" stroke="#111" stroke-width="1"/></svg>
<div style="left:1057.5px;top:451.9px;width:224.5px;height:13.7px;background:#e6e6e6;"></div>
<div style="left:1066px;top:452.45px;width:100px;height:13.7px;line-height:13.7px;font-size:9.8px;font-weight:normal;color:#222;text-align:left;white-space:nowrap;">Coil conductor</div>
<div style="left:1171.5px;top:452.45px;width:110px;height:13.7px;line-height:13.7px;font-size:9.8px;font-weight:normal;color:#222;text-align:left;white-space:nowrap;letter-spacing:-0.35px;">REF.Copper</div>
<div style="left:1066px;top:467.0px;width:100px;height:13.7px;line-height:13.7px;font-size:9.8px;font-weight:normal;color:#222;text-align:left;white-space:nowrap;">Insulators</div>
<div style="left:1171.5px;top:467.0px;width:110px;height:13.7px;line-height:13.7px;font-size:9.8px;font-weight:normal;color:#222;text-align:left;white-space:nowrap;letter-spacing:-0.35px;">Diversified</div>
<svg style="left:1058px;top:470.5px;" width="7" height="7" viewBox="0 0 7 7"><rect x="0.5" y="0.5" width="6" height="6" fill="#fff" stroke="#bbb" stroke-width="1"/><path d="M1.8 3.5 H5.2 M3.5 1.8 V5.2" stroke="#111" stroke-width="1"/></svg>
<div style="left:1168.8px;top:438.2px;width:1.2px;height:41.099999999999994px;background:#a8a8a8;"></div>
<div style="left:1056.3px;top:420px;width:226.7px;height:60.3px;box-sizing:border-box;border:1.3px solid #8a8a8a;"></div>
<div style="left:1056.3px;top:488.3px;width:226.7px;height:46.599999999999994px;background:#fff;"></div>
<div style="left:1056.3px;top:488.3px;width:226.7px;height:17.6px;background:#bfbfbf;"></div>
<div style="left:1056.3px;top:505.1px;width:226.7px;height:1.4px;background:#8a8a8a;"></div>
<div style="left:1056.3px;top:488.90000000000003px;width:226.7px;height:17px;line-height:17px;font-size:10.2px;font-weight:normal;color:#222;text-align:center;white-space:nowrap;">COOLING</div>
<div style="left:1066px;top:506.2px;width:100px;height:13.7px;line-height:13.7px;font-size:9.8px;font-weight:normal;color:#222;text-align:left;white-space:nowrap;">Internal Fluid</div>
<div style="left:1171.5px;top:506.2px;width:110px;height:13.7px;line-height:13.7px;font-size:9.8px;font-weight:normal;color:#222;text-align:left;white-space:nowrap;letter-spacing:-0.35px;">REF.Air</div>
<svg style="left:1058px;top:509.7px;" width="7" height="7" viewBox="0 0 7 7"><rect x="0.5" y="0.5" width="6" height="6" fill="#fff" stroke="#bbb" stroke-width="1"/><path d="M1.8 3.5 H5.2 M3.5 1.8 V5.2" stroke="#111" stroke-width="1"/></svg>
<div style="left:1057.5px;top:520.2px;width:224.5px;height:13.7px;background:#e6e6e6;"></div>
<div style="left:1066px;top:520.75px;width:100px;height:13.7px;line-height:13.7px;font-size:9.8px;font-weight:normal;color:#222;text-align:left;white-space:nowrap;">External Fluid</div>
<div style="left:1171.5px;top:520.75px;width:110px;height:13.7px;line-height:13.7px;font-size:9.8px;font-weight:normal;color:#222;text-align:left;white-space:nowrap;letter-spacing:-0.35px;">REF.Air</div>
<div style="left:1168.8px;top:506.5px;width:1.2px;height:27.4px;background:#a8a8a8;"></div>
<div style="left:1056.3px;top:488.3px;width:226.7px;height:46.599999999999994px;box-sizing:border-box;border:1.3px solid #8a8a8a;"></div>
<div style="left:1126.2px;top:545.8px;width:36.4px;height:22.1px;background:#fff;box-sizing:border-box;border:1.5px solid #00a8de;"></div>
<div style="left:1176.3px;top:545.8px;width:36.5px;height:22.1px;background:#fff;box-sizing:border-box;border:1.3px solid #8a8a8a;"></div>
<div style="left:1154px;top:600px;width:36.7px;height:22.3px;background:#fff;box-sizing:border-box;border:1.3px solid #8a8a8a;"></div>
<svg style="left:0;top:0;pointer-events:none" width="1357" height="743" viewBox="0 0 1357 743"><g fill="none" stroke="#1aaee6" stroke-width="1.5">
<path d="M34.8 123 H55.6 L59.5 127 V149.2 H34.8 Z"/>
<path d="M39.6 123 V132.8 H54.4 V123"/>
<rect x="45.3" y="125.3" width="4.4" height="4.4" stroke-width="1.3"/>
<path d="M39.6 149.2 V136.6 H55"/>
</g>
<circle cx="55.1" cy="144.6" r="7.2" fill="#1aaee6"/>
<path d="M55.1 140.8 V148.4 M51.8 142.7 L58.4 146.5 M51.8 146.5 L58.4 142.7" stroke="#cfe9f5" stroke-width="1.3"/>
<path d="M129.2 120.7 V101.6 H108.3 V109" fill="none" stroke="#404040" stroke-width="1.6"/>
<path d="M105 108.2 H111.7 L108.35 113.8 Z" fill="#1a1a1a"/>
<g fill="none" stroke="#333" stroke-width="1.3">
<path d="M103.4 152.4 H106.2 V150.2 H110.6 V152.4 H117.6 L119.8 150 H125 L127 152.4 H130.7 V172.2 H103.4 Z"/>
<rect x="106.3" y="155" width="4.3" height="2.8"/>
<circle cx="119.5" cy="162.9" r="6.3"/>
</g><circle cx="119.5" cy="162.9" r="4.3" fill="#333"/>
<g transform="translate(265,112) scale(0.053821)"><circle cx="492" cy="415" r="245" fill="none" stroke="#2a2a2a" stroke-width="62"/><circle cx="492" cy="415" r="102" fill="#2a2a2a"/><path d="M627.0 415.0 L720.0 415.0 M587.5 510.5 L653.2 576.2 M492.0 550.0 L492.0 643.0 M396.5 510.5 L330.8 576.2 M357.0 415.0 L264.0 415.0 M396.5 319.5 L330.8 253.8 M492.0 280.0 L492.0 187.0 M587.5 319.5 L653.2 253.8 " stroke="#2a2a2a" stroke-width="42"/></g>
<g transform="translate(335,112) scale(0.053821)"><path fill-rule="evenodd" fill="#2a2a2a" d="M245 205 H700 V625 H245 Z M655 418 A180 180 0 1 0 295 418 A180 180 0 1 0 655 418 Z"/><rect x="287" y="145" width="28" height="62" fill="#2a2a2a"/><rect x="376" y="145" width="28" height="62" fill="#2a2a2a"/><rect x="461" y="145" width="28" height="62" fill="#2a2a2a"/><rect x="541" y="145" width="28" height="62" fill="#2a2a2a"/><rect x="621" y="145" width="28" height="62" fill="#2a2a2a"/><rect x="188" y="251" width="59" height="28" fill="#2a2a2a"/><rect x="698" y="251" width="59" height="28" fill="#2a2a2a"/><rect x="188" y="331" width="59" height="28" fill="#2a2a2a"/><rect x="698" y="331" width="59" height="28" fill="#2a2a2a"/><rect x="188" y="406" width="59" height="28" fill="#2a2a2a"/><rect x="698" y="406" width="59" height="28" fill="#2a2a2a"/><rect x="188" y="486" width="59" height="28" fill="#2a2a2a"/><rect x="698" y="486" width="59" height="28" fill="#2a2a2a"/><rect x="200" y="618" width="140" height="67" fill="#2a2a2a"/><rect x="615" y="618" width="140" height="67" fill="#2a2a2a"/></g>
<g transform="translate(810,112) scale(0.053821)"><path fill-rule="evenodd" fill="#2a2a2a" d="M150 205 H595 V625 H150 Z M552 418 A180 180 0 1 0 192 418 A180 180 0 1 0 552 418 Z"/><rect x="191" y="145" width="28" height="62" fill="#2a2a2a"/><rect x="273" y="145" width="28" height="62" fill="#2a2a2a"/><rect x="361" y="145" width="28" height="62" fill="#2a2a2a"/><rect x="441" y="145" width="28" height="62" fill="#2a2a2a"/><rect x="521" y="145" width="28" height="62" fill="#2a2a2a"/><rect x="93" y="251" width="59" height="28" fill="#2a2a2a"/><rect x="593" y="251" width="59" height="28" fill="#2a2a2a"/><rect x="93" y="331" width="59" height="28" fill="#2a2a2a"/><rect x="593" y="331" width="59" height="28" fill="#2a2a2a"/><rect x="93" y="406" width="59" height="28" fill="#2a2a2a"/><rect x="593" y="406" width="59" height="28" fill="#2a2a2a"/><rect x="93" y="486" width="59" height="28" fill="#2a2a2a"/><rect x="593" y="486" width="59" height="28" fill="#2a2a2a"/><rect x="100" y="618" width="140" height="67" fill="#2a2a2a"/><rect x="510" y="618" width="140" height="67" fill="#2a2a2a"/><g fill="none" stroke="#2a2a2a" stroke-width="16"><path d="M325 300 Q360 345 325 390 Q290 435 325 470"/><path d="M385 300 Q420 345 385 390 Q350 435 385 470"/><path d="M440 300 Q475 345 440 390 Q405 435 440 470"/><path d="M265 515 H478"/></g></g>
<g transform="translate(395,112) scale(0.053821)"><rect x="320" y="170" width="315" height="490" fill="none" stroke="#2a2a2a" stroke-width="20"/><rect x="315" y="315" width="325" height="200" fill="#2a2a2a"/><rect x="200" y="372" width="555" height="88" fill="#2a2a2a"/></g>
<g transform="translate(470,112) scale(0.053821)"><path fill-rule="evenodd" fill="#2a2a2a" d="M195 185 Q430 220 585 428 L485 420 L352 560 L352 600 L262 658 L138 578 L150 462 L185 442 L238 238 Z M282 500 Q238 478 262 420 L330 290 Q385 235 425 325 Q425 370 392 410 L312 495 Q297 508 282 500 Z"/></g>
<g transform="translate(525,112) scale(0.053821)"><circle cx="470" cy="428" r="200" fill="none" stroke="#2a2a2a" stroke-width="84"/><rect x="656.0" y="414.0" width="28" height="28" fill="#eee"/><rect x="640.8" y="490.5" width="28" height="28" fill="#eee"/><rect x="597.4" y="555.4" width="28" height="28" fill="#eee"/><rect x="532.5" y="598.8" width="28" height="28" fill="#eee"/><rect x="456.0" y="614.0" width="28" height="28" fill="#eee"/><rect x="379.5" y="598.8" width="28" height="28" fill="#eee"/><rect x="314.6" y="555.4" width="28" height="28" fill="#eee"/><rect x="271.2" y="490.5" width="28" height="28" fill="#eee"/><rect x="256.0" y="414.0" width="28" height="28" fill="#eee"/><rect x="271.2" y="337.5" width="28" height="28" fill="#eee"/><rect x="314.6" y="272.6" width="28" height="28" fill="#eee"/><rect x="379.5" y="229.2" width="28" height="28" fill="#eee"/><rect x="456.0" y="214.0" width="28" height="28" fill="#eee"/><rect x="532.5" y="229.2" width="28" height="28" fill="#eee"/><rect x="597.4" y="272.6" width="28" height="28" fill="#eee"/><rect x="640.8" y="337.5" width="28" height="28" fill="#eee"/></g>
<g transform="translate(605,112) scale(0.053821)"><path fill="#2a2a2a" d="M135 520 Q358 198 690 205 L690 292 L610 302 L628 440 L652 448 L655 472 L525 500 L515 475 L545 460 L515 325 Q430 350 365 395 L455 505 L480 520 L470 540 L390 612 L365 590 L395 555 L300 440 Q250 490 210 565 Z"/></g>
<g transform="translate(665,112) scale(0.053821)"><g fill="none" stroke="#333" stroke-width="24" stroke-linejoin="miter">
<path d="M220 560 V330 L370 180 L520 330 V555 L455 620 L390 555 V330 L545 180 L690 330 V560"/>
<path d="M305 330 L460 175 L600 330 V560 L495 660 L390 555"/>
<path d="M305 330 V560 L415 660 L520 555"/>
</g></g>
<g transform="translate(745,112) scale(0.053821)"><g fill="none" stroke="#2a2a2a" stroke-width="26"><path d="M325 150 Q380 215 325 290 Q270 365 325 440"/><path d="M425 150 Q480 215 425 290 Q370 365 425 440"/><path d="M525 150 Q580 215 525 290 Q470 365 525 440"/></g><path fill="#2a2a2a" d="M200 558 H645 V662 H592 Q540 575 425 575 Q310 575 262 662 H200 Z"/><rect x="241" y="495" width="28" height="66" fill="#2a2a2a"/><rect x="326" y="495" width="28" height="66" fill="#2a2a2a"/><rect x="411" y="495" width="28" height="66" fill="#2a2a2a"/><rect x="491" y="495" width="28" height="66" fill="#2a2a2a"/><rect x="571" y="495" width="28" height="66" fill="#2a2a2a"/><rect x="138" y="598" width="64" height="30" fill="#2a2a2a"/><rect x="643" y="598" width="60" height="30" fill="#2a2a2a"/></g>
<g transform="translate(55,235) scale(0.053821)" fill="#2a2a2a" stroke="#2a2a2a" stroke-width="14" stroke-linejoin="round"><path d="M182 568 L278 362 L328 462 L268 596 Z"/><path d="M292 242 L378 210 L522 558 L432 590 Z"/><path d="M452 228 L538 198 L686 558 L600 592 Z"/></g>
<g transform="translate(887.6,113.20000000000003) scale(0.053821)" fill="#1aaee6" stroke="#1aaee6" stroke-width="14" stroke-linejoin="round"><path d="M182 568 L278 362 L328 462 L268 596 Z"/><path d="M292 242 L378 210 L522 558 L432 590 Z"/><path d="M452 228 L538 198 L686 558 L600 592 Z"/></g>
<g transform="translate(1169.5,234.8) scale(0.72) translate(-78.3,-256.4)"><g transform="translate(55,235) scale(0.053821)" fill="#2a2a2a" stroke="#2a2a2a" stroke-width="14" stroke-linejoin="round"><path d="M182 568 L278 362 L328 462 L268 596 Z"/><path d="M292 242 L378 210 L522 558 L432 590 Z"/><path d="M452 228 L538 198 L686 558 L600 592 Z"/></g></g>
<g transform="translate(160,235) scale(0.053821)"><g fill="none" stroke="#2a2a2a" stroke-width="28"><path d="M252 316 H568 L634 585 H172 Z"/><circle cx="408" cy="256" r="44"/></g><g stroke="#2a2a2a" stroke-width="24"><path d="M305 400 L257 535 M400 408 V535 M500 400 L538 535"/></g></g>
<g transform="translate(55,290) scale(0.053821)"><g fill="none" stroke="#2a2a2a" stroke-width="34"><path d="M288.6 192.3 A246 246 0 0 1 604.8 186.8"/><path d="M688.7 318.5 A246 246 0 0 1 509.5 616.7"/><path d="M361.8 607.7 A246 246 0 0 1 218.1 295.9"/></g><g stroke="#2a2a2a" stroke-width="18" fill="none"><path d="M450 378 V165 M450 378 L270 470 M450 378 L632 470"/><path d="M330 458 Q380 535 470 530 Q600 515 590 420 Q585 360 570 320"/></g><circle cx="450" cy="378" r="30" fill="#2a2a2a"/><path d="M538 238 L618 302 L545 332 Z" fill="#2a2a2a"/></g>
<g transform="translate(160,290) scale(0.053821)"><g fill="none" stroke="#2a2a2a" stroke-width="26" stroke-linejoin="round"><path d="M338 248 Q175 405 155 530 Q148 612 215 612 H598 Q660 612 652 530 Q632 405 472 248"/><path d="M340 238 L300 160 Q292 128 335 133 Q405 122 478 133 Q518 128 510 160 L470 238"/></g><rect x="335" y="222" width="140" height="32" fill="#2a2a2a"/></g>
<text x="181.5" y="319" font-family="Liberation Sans" font-size="12.5" font-weight="normal" fill="#2a2a2a" text-anchor="middle">$</text>
<circle cx="1269.8" cy="136.7" r="13.9" fill="none" stroke="#2a2a2a" stroke-width="2.1"/><text x="1270" y="145.6" font-family="Liberation Sans" font-size="25.5" font-weight="bold" fill="#2a2a2a" text-anchor="middle">?</text>
<path d="M1136.4 555.2 L1142.4 562.4 L1151.8 551.6" fill="none" stroke="#1aaee6" stroke-width="1.5"/>
<path d="M1188.1 557.8 A6 6 0 1 0 1194.1 551.8" fill="none" stroke="#222" stroke-width="1.3"/><path d="M1191.8 551.8 L1195.8 549.4 L1195.8 554.2 Z" fill="#222"/>
<rect x="1165.3" y="603.4" width="10.6" height="15.5" rx="1" fill="#fff" stroke="#333" stroke-width="1.1"/><path d="M1167 609.5 H1172 M1167 611.5 H1172 M1167 613.5 H1172 M1167 615.5 H1172" stroke="#bbb" stroke-width="0.9"/><path d="M1172 612.6 H1176.5" stroke="#333" stroke-width="1.8"/><path d="M1176 610.3 L1179.3 612.6 L1176 614.9 Z" fill="#333"/></svg>
<div style="left:143px;top:61px;width:1px;height:236px;background:#000;box-shadow:0 0 0 1px rgba(255,255,255,0.35);"></div>
<svg style="left:138.5px;top:292.2px;" width="10" height="10" viewBox="0 0 10 10"><circle cx="5" cy="5" r="4.6" fill="#000"/></svg>
<div style="left:591px;top:61px;width:1px;height:195px;background:#000;box-shadow:0 0 0 1px rgba(255,255,255,0.35);"></div>
<svg style="left:586.5px;top:250.8px;" width="10" height="10" viewBox="0 0 10 10"><circle cx="5" cy="5" r="4.6" fill="#000"/></svg>
<div style="left:883px;top:61px;width:1px;height:76px;background:#000;box-shadow:0 0 0 1px rgba(255,255,255,0.35);"></div>
<svg style="left:878.5px;top:131.8px;" width="10" height="10" viewBox="0 0 10 10"><circle cx="5" cy="5" r="4.6" fill="#000"/></svg>
<div style="left:1191px;top:610px;width:99px;height:1px;background:#000;box-shadow:0 0 0 1px rgba(255,255,255,0.35);"></div>
<svg style="left:1185.5px;top:605.3px;" width="10" height="10" viewBox="0 0 10 10"><circle cx="5" cy="5" r="4.6" fill="#000"/></svg>
<svg style="left:113px;top:4.200000000000003px;" width="60" height="60" viewBox="0 0 60 60"><circle cx="30" cy="30" r="26.3" fill="#fff" stroke="#000" stroke-width="2.2"/></svg>
<div style="left:113px;top:4.400000000000003px;width:60px;height:60px;line-height:60px;font-size:32.5px;font-weight:normal;color:#000;text-align:center;white-space:nowrap;">2</div>
<svg style="left:560.3px;top:4.200000000000003px;" width="60" height="60" viewBox="0 0 60 60"><circle cx="30" cy="30" r="26.3" fill="#fff" stroke="#000" stroke-width="2.2"/></svg>
<div style="left:560.3px;top:4.400000000000003px;width:60px;height:60px;line-height:60px;font-size:32.5px;font-weight:normal;color:#000;text-align:center;white-space:nowrap;">3</div>
<svg style="left:854px;top:4.200000000000003px;" width="60" height="60" viewBox="0 0 60 60"><circle cx="30" cy="30" r="26.3" fill="#fff" stroke="#000" stroke-width="2.2"/></svg>
<div style="left:854px;top:4.400000000000003px;width:60px;height:60px;line-height:60px;font-size:32.5px;font-weight:normal;color:#000;text-align:center;white-space:nowrap;"></div>
<svg style="left:870px;top:15px;" width="30" height="40" viewBox="0 0 30 40"><path d="M15.2 8 V30.2 M15.2 8.4 Q12.5 12.6 8.4 14.2" fill="none" stroke="#000" stroke-width="3"/></svg>
<svg style="left:1287.4px;top:579.9px;" width="60" height="60" viewBox="0 0 60 60"><circle cx="30" cy="30" r="26.9" fill="#fff" stroke="#000" stroke-width="2.2"/></svg>
<div style="left:1287.4px;top:580.1px;width:60px;height:60px;line-height:60px;font-size:32.5px;font-weight:normal;color:#000;text-align:center;white-space:nowrap;">4</div>
</body></html>
